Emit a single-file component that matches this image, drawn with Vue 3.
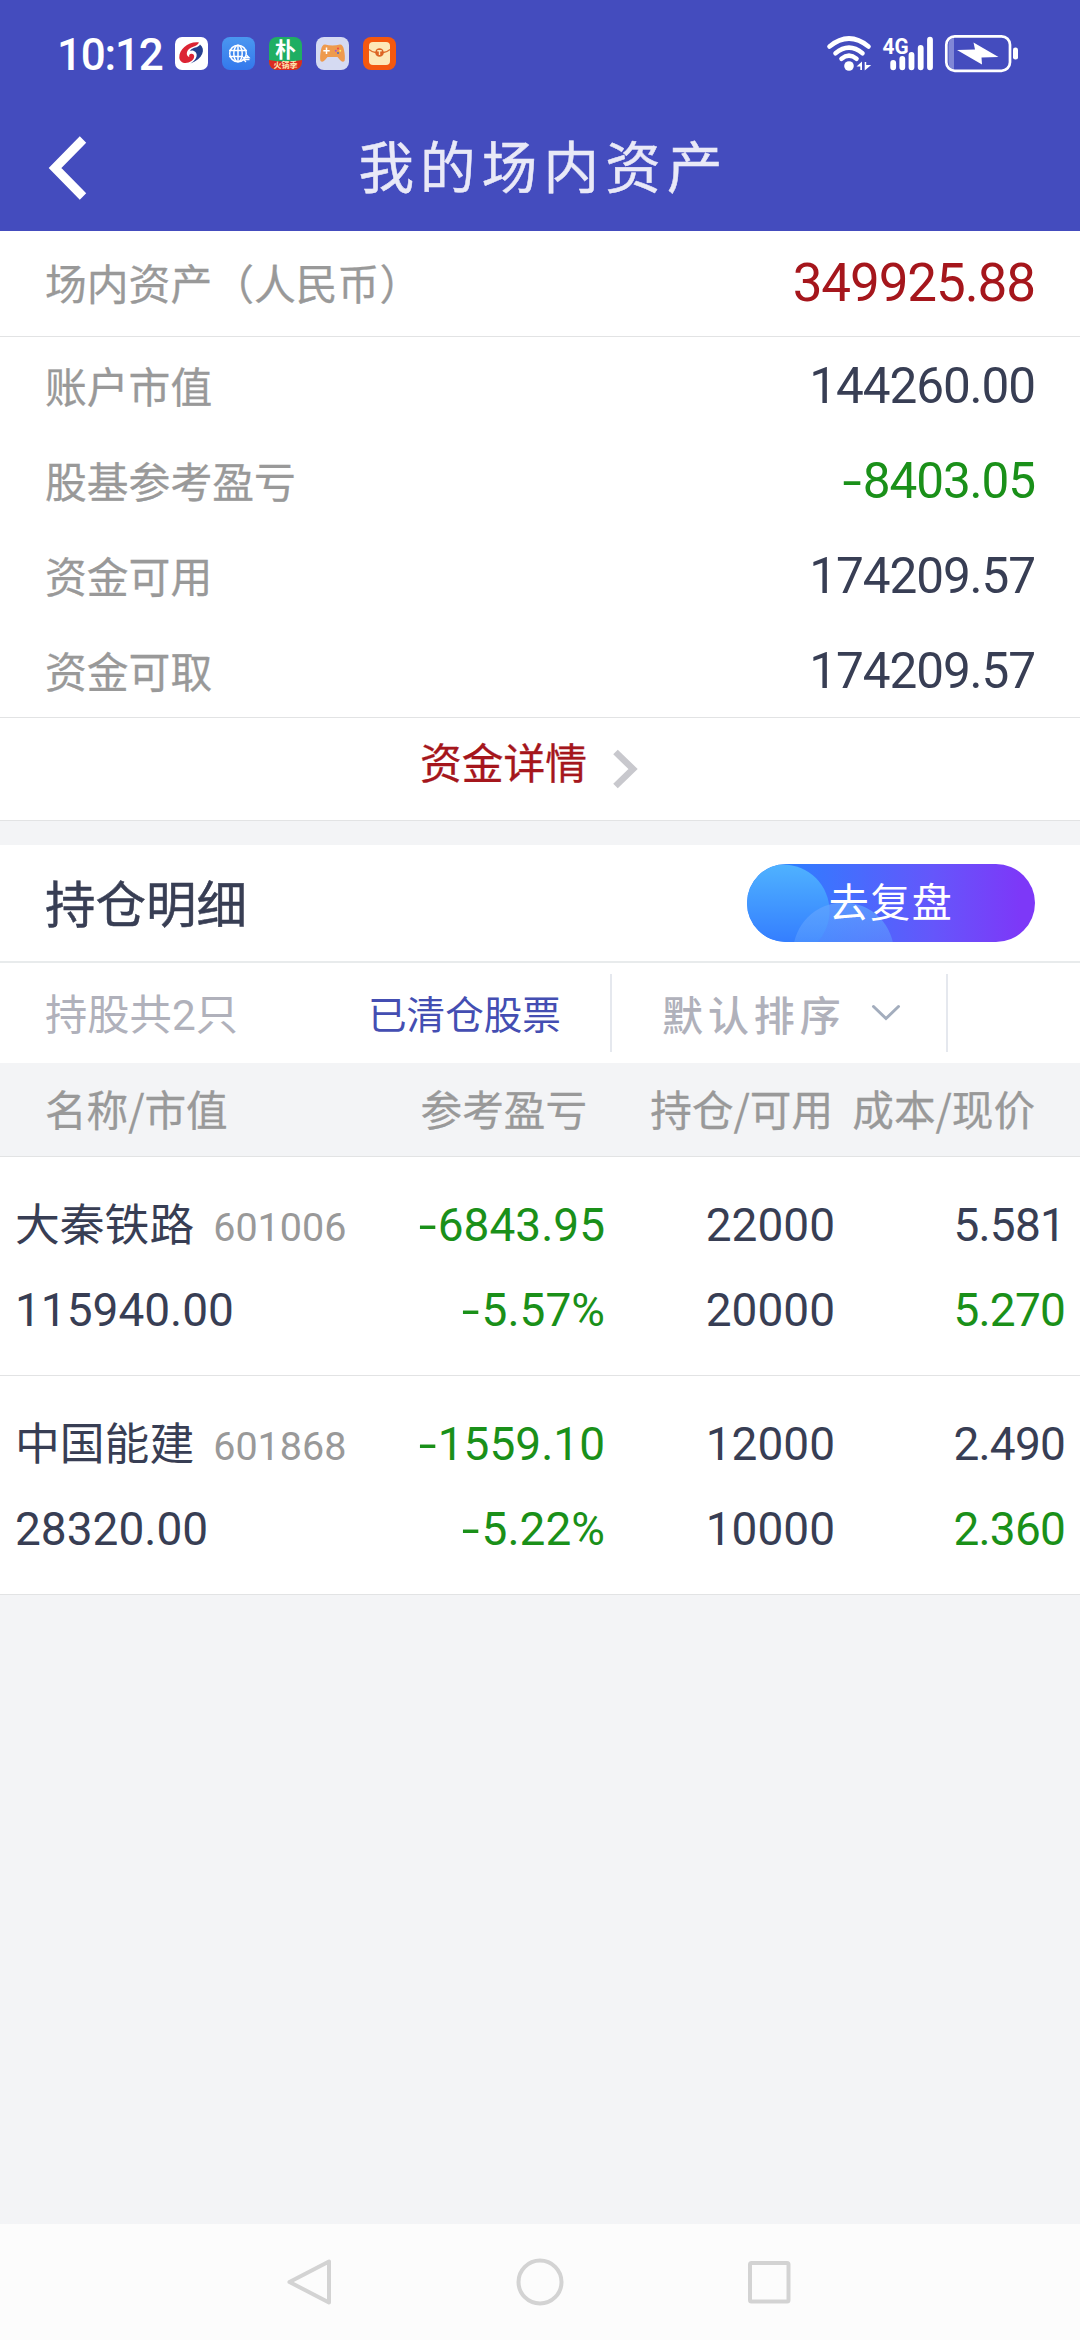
<script setup>
const total = { label: '场内资产（人民币）', value: '349925.88' }

const summary = [
  { label: '账户市值', value: '144260.00' },
  { label: '股基参考盈亏', value: '-8403.05' },
  { label: '资金可用', value: '174209.57' },
  { label: '资金可取', value: '174209.57' },
]

const holdings = [
  {
    name: '大秦铁路', code: '601006', market: '115940.00',
    profit: '-6843.95', rate: '-5.57%',
    amount: '22000', available: '20000',
    cost: '5.581', price: '5.270',
  },
  {
    name: '中国能建', code: '601868', market: '28320.00',
    profit: '-1559.10', rate: '-5.22%',
    amount: '12000', available: '10000',
    cost: '2.490', price: '2.360',
  },
]

const isLoss = (v) => v.startsWith('-')
const digits = (v) => v.replace('-', '')
</script>

<template>
  <div class="screen">
    <header class="top">
      <div class="status">
        <span class="time">10:12</span>
        <div class="apps">
          <svg viewBox="0 0 33 33">
            <rect width="33" height="33" rx="7" fill="#fff" />
            <path d="M24 5.5C14 4 4 12 4.300 20.500C4.500 25 9 27 13.500 25.500C18 24 20.500 20 18.500 17.500C16.500 15.500 13 17.500 14.500 20C10.500 19 11 13.500 15.500 11C18.500 9.200 22 9.500 24 5.500Z" fill="#dc2433" />
            <path d="M25 7.500C31 12 28 22 15.500 26.500C20.500 23.500 23.500 18.500 20.500 15C19 13.300 16.500 13 15 14C17.500 9.500 23 11.500 25 7.500Z" fill="#263f8f" />
          </svg>
          <svg viewBox="0 0 33 33">
            <defs>
              <linearGradient id="globe" x1="0" y1="0" x2="0" y2="1">
                <stop offset="0" stop-color="#4a97f0" /><stop offset="1" stop-color="#3478ec" />
              </linearGradient>
            </defs>
            <rect width="33" height="33" rx="8" fill="url(#globe)" />
            <g fill="none" stroke="#fff" stroke-width="1.500">
              <circle cx="16" cy="16.500" r="8.300" />
              <ellipse cx="16" cy="16.500" rx="4.200" ry="8.300" />
              <path d="M7 13.500H25M7 19.500H21M16 8.500V24.500" />
            </g>
            <path d="M21 20.500H27L24.500 18M27.500 22.500H21.500L24 25" fill="none" stroke="#fff" stroke-width="1.300" />
          </svg>
          <svg viewBox="0 0 33 33">
            <rect width="33" height="33" rx="8" fill="#1fae63" />
            <path d="M0 23Q16.500 26 33 23V25A8 8 0 0 1 25 33H8A8 8 0 0 1 0 25Z" fill="#dc2a20" />
            <text x="16.500" y="20" text-anchor="middle" class="pu">朴</text>
            <text x="16.500" y="31.300" text-anchor="middle" class="pu-sub">火锅季</text>
          </svg>
          <svg viewBox="0 0 33 33">
            <rect width="33" height="33" rx="8" fill="#d5daf2" />
            <path d="M9 7.500Q16.500 9.500 24 7.500Q27 7.500 28 13Q29.500 20 28.500 24Q26.500 26 24 23L21.500 20H11.500L9 23Q6.500 26 4.500 24Q3.500 20 5 13Q6 7.500 9 7.500Z" fill="#ee9a4e" />
            <path d="M10.500 10.500V17M7.300 13.700H13.700" stroke="#fff" stroke-width="1.500" />
            <circle cx="22" cy="11.500" r="1" fill="#e44" /><circle cx="22" cy="16" r="1" fill="#46c" />
            <circle cx="19.800" cy="13.700" r="1" fill="#a5c" /><circle cx="24.200" cy="13.700" r="1" fill="#fe6" />
          </svg>
          <svg viewBox="0 0 33 33">
            <rect width="33" height="33" rx="8" fill="#f4580f" />
            <rect x="6" y="5" width="21" height="23" rx="4" fill="#fde9b8" />
            <path d="M6 12.500Q9 15 12.500 15.500H20.500Q24 15 27 12.500" fill="none" stroke="#e0702c" stroke-width="1.300" />
            <circle cx="16.500" cy="15.500" r="4.300" fill="#dc6524" />
            <path d="M14.300 13.700H18.700M16.500 13.700V18" stroke="#fde9b8" stroke-width="1.400" />
          </svg>
        </div>
        <div class="signals">
          <svg class="wifi" viewBox="827 35 45 37">
            <g fill="none" stroke="#fff" stroke-width="4.600" stroke-linecap="round">
              <path d="M829.500 46.500Q849 30.500 868.500 46.500" />
              <path d="M835.500 53.200Q849 42 862.500 53.200" />
              <path d="M841.500 58.700Q849 52.500 856.500 58.700" />
            </g>
            <circle cx="849" cy="66" r="4.800" fill="#fff" />
            <path d="M856.500 66.500L862 61.500V70H860.300V66.500ZM864.700 62H866.200V65H871.200L864.700 70.500Z" fill="#fff" />
          </svg>
          <svg class="cell" viewBox="882 35 52 37">
            <text x="882.500" y="53.500" class="gen" textLength="26" lengthAdjust="spacingAndGlyphs">4G</text>
            <g stroke="#fff" stroke-width="5.800" stroke-linecap="round">
              <path d="M893.200 63V67.300M902.300 59V67.300M911.500 55V67.300M920.700 48V67.300M930 39.700V67.300" />
            </g>
          </svg>
          <svg class="battery" viewBox="944 34 76 39">
            <path d="M954 38V69Q948.500 69 948.500 62V46Q948.500 38 954 38Z" fill="#8087d6" />
            <rect x="946.300" y="36.300" width="63.700" height="34.500" rx="8.500" fill="none" stroke="#fff" stroke-width="2.700" />
            <rect x="1013" y="47.500" width="5" height="12" rx="2.300" fill="#fff" />
            <path d="M957 50L975 49.500L973.500 42.500L998.500 57L981.500 57.500L982 64.500Z" fill="#fff" />
          </svg>
        </div>
      </div>
      <div class="titlebar">
        <svg class="back" viewBox="0 0 40 64"><path d="M35 3.500L7 32L35 60.500" /></svg>
        <h1>我的场内资产</h1>
      </div>
    </header>

    <section class="assets">
      <div class="total">
        <span class="label">{{ total.label }}</span>
        <span class="num big">{{ total.value }}</span>
      </div>
      <div class="lines">
        <div v-for="s in summary" :key="s.label" class="line">
          <span class="label">{{ s.label }}</span>
          <span class="num" :class="{ loss: isLoss(s.value) }"><span v-if="isLoss(s.value)" class="minus">-</span>{{ digits(s.value) }}</span>
        </div>
      </div>
      <div class="detail">
        <span>资金详情</span>
        <svg viewBox="0 0 26 40"><path d="M3.500 3L21 20L3.500 37" /></svg>
      </div>
    </section>

    <section class="positions">
      <div class="heading">
        <h2>持仓明细</h2>
        <button class="review">
          <svg viewBox="747 864 288 78">
            <defs>
              <linearGradient id="c1" x1="0" y1="0" x2="0" y2="1">
                <stop offset="0" stop-color="#4fb2ff" /><stop offset="1" stop-color="#2f74ff" />
              </linearGradient>
              <linearGradient id="c2" x1="0" y1="0" x2="0" y2=".8">
                <stop offset="0" stop-color="#62a4ff" stop-opacity=".75" /><stop offset="1" stop-color="#62a4ff" stop-opacity=".1" />
              </linearGradient>
            </defs>
            <circle cx="783" cy="911" r="46.500" fill="url(#c1)" />
            <circle cx="843.500" cy="953" r="50.500" fill="url(#c2)" />
          </svg>
          <span>去复盘</span>
        </button>
      </div>
      <div class="filters">
        <span class="count">持股共2只</span>
        <span class="cleared">已清仓股票</span>
        <div class="sort">
          <span>默认排序</span>
          <svg viewBox="0 0 28 16"><path d="M1.500 1.500L14 13.500L26.500 1.500" /></svg>
        </div>
      </div>
      <div class="thead">
        <span>名称/市值</span><span>参考盈亏</span><span>持仓/可用</span><span>成本/现价</span>
      </div>
      <div v-for="h in holdings" :key="h.code" class="holding">
        <div class="cells">
          <span class="name">{{ h.name }}<small>{{ h.code }}</small></span>
          <span class="loss"><span class="minus">-</span>{{ digits(h.profit) }}</span>
          <span>{{ h.amount }}</span>
          <span class="price">{{ h.cost }}</span>
        </div>
        <div class="cells">
          <span>{{ h.market }}</span>
          <span class="loss"><span class="minus">-</span>{{ digits(h.rate) }}</span>
          <span>{{ h.available }}</span>
          <span class="price loss">{{ h.price }}</span>
        </div>
      </div>
    </section>

    <nav class="sysnav">
      <svg viewBox="0 0 48 48"><path d="M42 3.500V44.500L2.500 24Z" /></svg>
      <svg viewBox="0 0 48 48"><circle cx="24" cy="24" r="21.500" /></svg>
      <svg viewBox="0 0 48 48"><rect x="5" y="5" width="38.500" height="38.500" rx="1.500" /></svg>
    </nav>
  </div>
</template>

<style>
body {
  margin: 0;
  background: #f3f4f6;
}
</style>

<style scoped>
.screen {
  display: flex;
  flex-direction: column;
  width: 1080px;
  height: 2340px;
  overflow: hidden;
  background: #f3f4f6;
  color: #383e54;
  font-family: Roboto, "Noto Sans CJK SC", sans-serif;
}
svg { display: block; flex: none; overflow: visible; }
h1, h2 { margin: 0; font-weight: 400; }

.top {
  height: 231px;
  background: #444cbe;
  color: #fff;
}
.status {
  display: flex;
  align-items: center;
  height: 107px;
  padding: 0 60px 0 57px;
}
.time {
  width: 118px;
  font-size: 44px;
  font-weight: 500;
  line-height: 50px;
  letter-spacing: -1.200px;
  padding-top: 2px;
}
.apps { display: flex; gap: 14px; }
.apps svg { width: 33px; height: 33px; }
.pu { font: 700 21px "Noto Sans CJK SC", sans-serif; fill: #fff; }
.pu-sub { font: 700 8px "Noto Sans CJK SC", sans-serif; fill: #ffe7b0; }
.signals {
  display: flex;
  align-items: center;
  gap: 10px;
  margin-left: auto;
}
.wifi { width: 45px; height: 37px; }
.cell { width: 52px; height: 37px; }
.battery { width: 76px; height: 39px; }
.gen { font: 700 22px Roboto, sans-serif; fill: #fff; }
.titlebar {
  display: grid;
  grid-template-columns: 90px 1fr 90px;
  align-items: center;
  height: 122px;
}
.back { width: 40px; height: 64px; margin-left: 48px; }
.back path { fill: none; stroke: #fff; stroke-width: 9; }
h1 {
  font-size: 55.500px;
  line-height: 80px;
  letter-spacing: 6.200px;
  text-align: center;
  color: #e9e9f7;
  padding: 4px 0 0 7px;
  -webkit-text-stroke: 0.5px;
}

.assets { background: #fff; border-bottom: 1px solid #e2e3e4; }
.total, .line {
  display: flex;
  align-items: center;
  justify-content: space-between;
  padding: 0 45px;
}
.total { height: 105px; border-bottom: 1px solid #e2e3e4; }
.lines { border-bottom: 1px solid #e2e3e4; }
.line { height: 95px; }
.label {
  padding-top: 4px;
  font-size: 41.800px;
  line-height: 60px;
  color: #999;
  -webkit-text-stroke: 0.3px;
}
.line .label { padding-top: 8px; }
.num {
  padding-top: 2px;
  font-size: 49.500px;
  line-height: 60px;
  letter-spacing: -1.100px;
}
.big { padding: 0 0 2px; font-size: 53px; color: #a5161c; }
.loss { color: #1a9019; }
.minus {
  display: inline-block;
  width: 0.46em;
  text-align: center;
  transform: scaleX(1.400);
}
.detail {
  display: flex;
  justify-content: center;
  align-items: center;
  height: 102px;
  box-sizing: border-box;
  padding: 0 22px 16px 0;
  font-size: 41.800px;
  color: #a5161c;
  -webkit-text-stroke: 0.3px;
}
.detail svg { width: 26px; height: 40px; margin: 15px 0 0 25px; }
.detail path { fill: none; stroke: #c8c8cd; stroke-width: 6.500; }

.positions { margin-top: 24px; background: #fff; }
.heading {
  display: flex;
  align-items: center;
  justify-content: space-between;
  height: 116px;
  padding: 0 45px;
  border-bottom: 2px solid #e8ebec;
}
h2 {
  padding-top: 5px;
  font-size: 50.500px;
  line-height: 70px;
  -webkit-text-stroke: 0.5px;
}
.review {
  position: relative;
  width: 288px;
  height: 78px;
  padding: 0;
  border: 0;
  border-radius: 39px;
  overflow: hidden;
  background: linear-gradient(90deg, #2f7dff 15%, #6556fb 65%, #7d38f8 95%);
  color: #fff;
  font: 40px/72px "Noto Sans CJK SC", sans-serif;
  letter-spacing: 1.500px;
}
.review svg { position: absolute; inset: 0; width: 288px; height: 78px; }
.review span { position: relative; display: block; height: 78px; }
.filters {
  display: grid;
  grid-template-columns: 325px 285px 338px 1fr;
  align-items: center;
  height: 100px;
}
.count, .cleared { padding-bottom: 3px; }
.count { padding-left: 45px; font-size: 42.300px; color: #b0b1bb; }
.cleared { padding-left: 43px; font-size: 38.600px; color: #444eb2; }
.sort {
  display: flex;
  align-items: center;
  height: 78px;
  box-sizing: border-box;
  border: solid #e5e8ee;
  border-width: 0 2px;
  padding-left: 50px;
  font-size: 41px;
  font-weight: 500;
  letter-spacing: 4.900px;
  color: #b0b1bb;
}
.sort span { padding-bottom: 1px; }
.sort svg { width: 28px; height: 16px; margin-left: 26px; }
.sort path { fill: none; stroke: #a3adbd; stroke-width: 3; stroke-linecap: round; }
.cells {
  display: grid;
  grid-template-columns: 1fr 230px 230px 230px;
  height: 85px;
  font-size: 46px;
  line-height: 83px;
  white-space: nowrap;
}
.thead > :not(:first-child), .cells > :not(:first-child) { text-align: right; }
.thead {
  display: grid;
  grid-template-columns: 1fr 220px 246px 202px;
  align-items: center;
  height: 93px;
  box-sizing: border-box;
  padding: 0 45px 3px;
  background: #f3f4f6;
  font-family: "Noto Sans CJK SC", sans-serif;
  font-size: 41.600px;
  color: #999;
  -webkit-text-stroke: 0.3px;
}
.holding {
  box-sizing: border-box;
  height: 219px;
  padding: 27px 15px 0;
  border-top: 1px solid #e2e3e4;
}
.holding:last-child { height: 220px; border-bottom: 1px solid #e2e3e4; }
.price { letter-spacing: -0.800px; }
.name { font-size: 44.800px; }
.name small { margin-left: 19px; font-size: 39.500px; color: #999; }

.sysnav {
  display: flex;
  align-items: center;
  justify-content: center;
  gap: 181px;
  height: 116px;
  margin-top: auto;
  background: #fcfcfc;
}
.sysnav svg { width: 48px; height: 48px; }
.sysnav svg * { fill: none; stroke: #d3d3d3; stroke-width: 4; stroke-linejoin: round; }
</style>
